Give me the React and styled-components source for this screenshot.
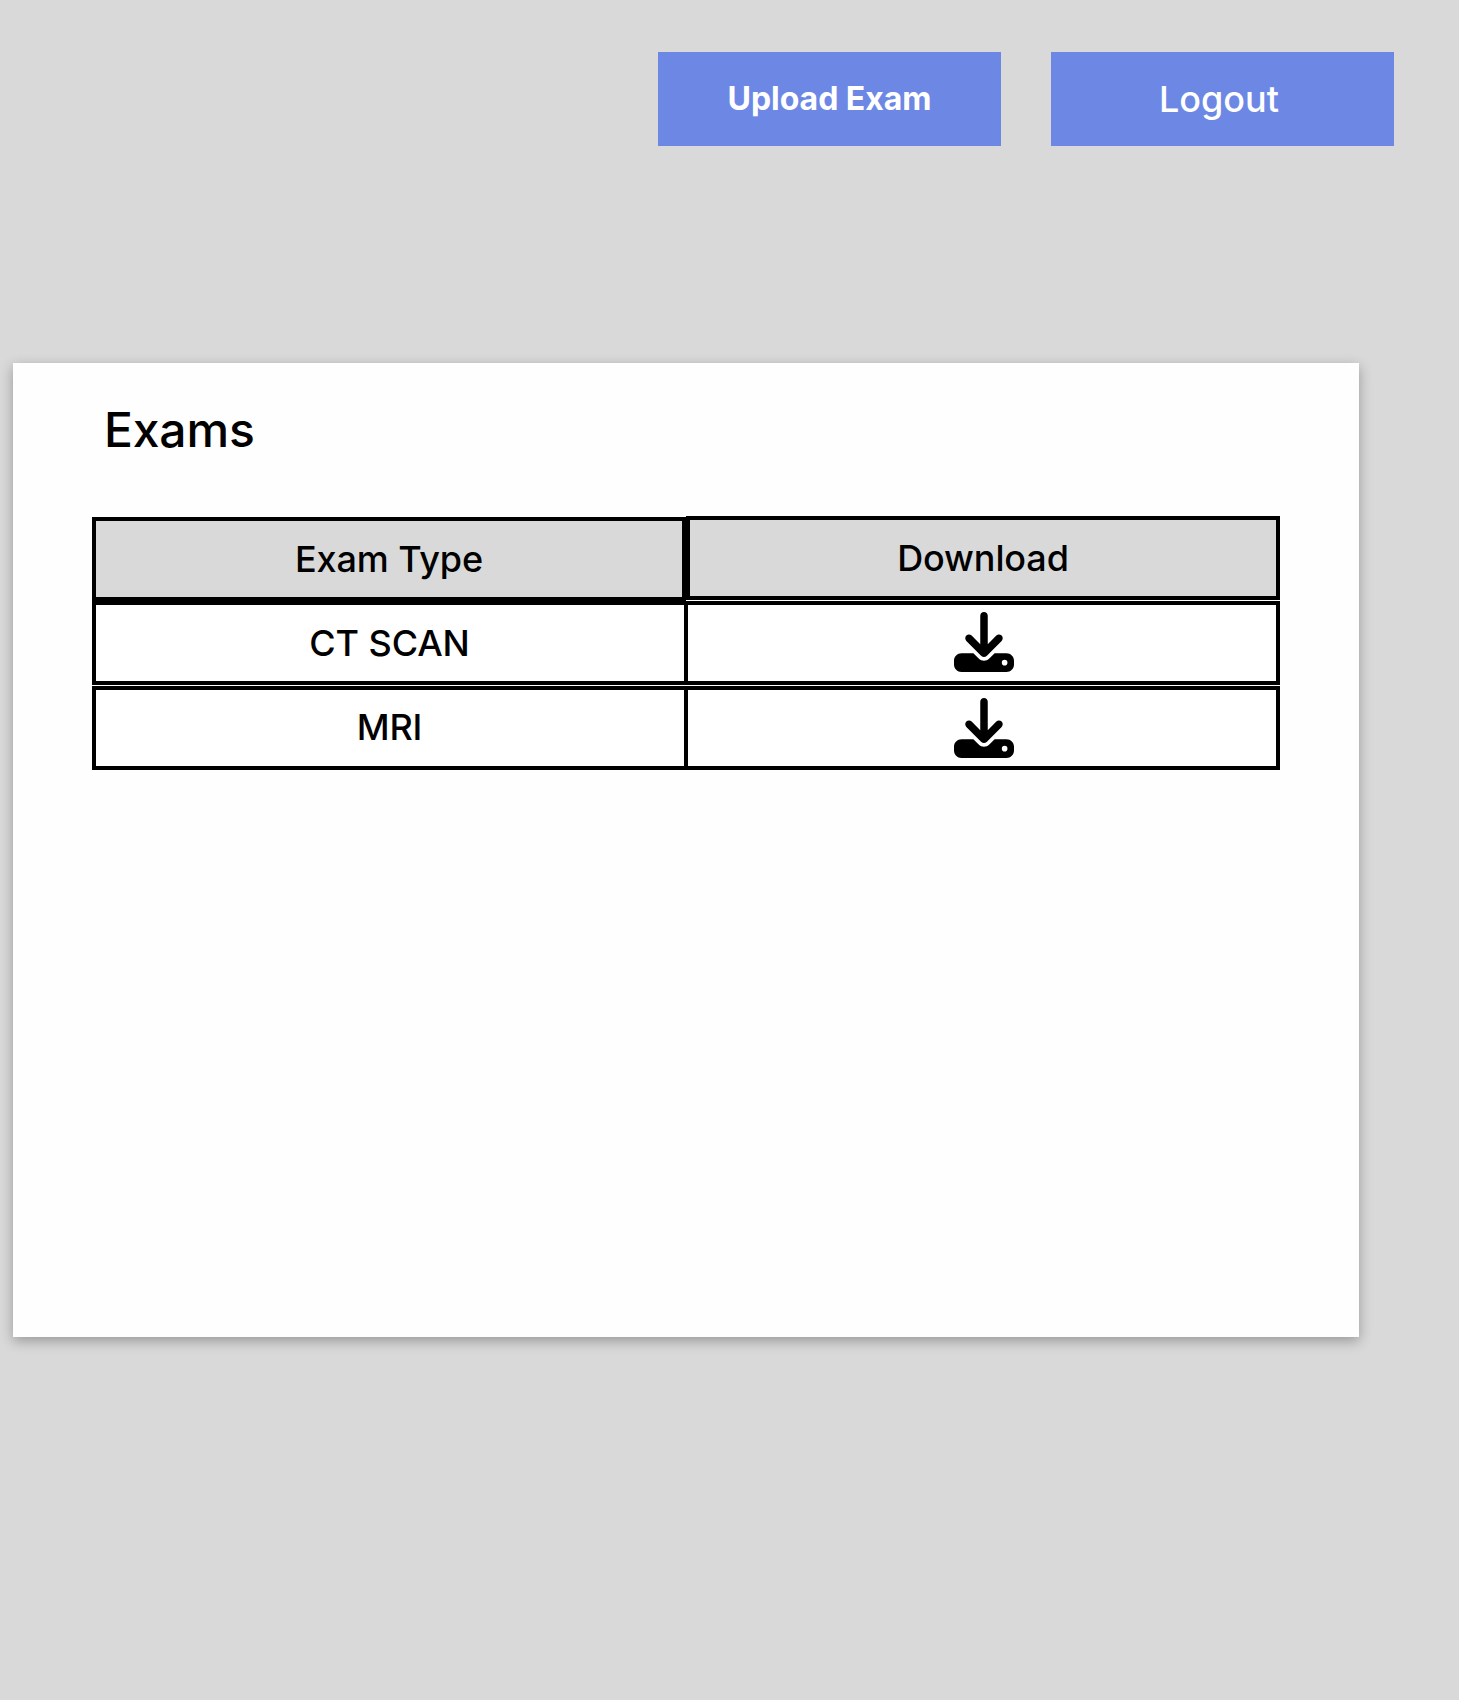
import React from "react";
import styled, { createGlobalStyle } from "styled-components";
import { FaDownload } from "react-icons/fa6";

const GlobalStyle = createGlobalStyle`
  *, *::before, *::after { box-sizing: border-box; }
  body {
    margin: 0;
    background: #d9d9d9;
    color: #000;
    font-family: Inter, "Liberation Sans", sans-serif;
  }
`;

const Page = styled.div`
  min-height: 1700px;
  padding: 52px 65px 0 13px;
  background: #d9d9d9;
`;

const Toolbar = styled.header`
  display: flex;
  justify-content: flex-end;
  gap: 50px;
`;

const Button = styled.button`
  display: flex;
  align-items: center;
  justify-content: center;
  width: 343px;
  height: 94px;
  padding: 0 ${(p) => p.$shift || 0}px ${(p) => p.$lift || 0}px 0;
  border: 0;
  background: #6d87e5;
  color: #fff;
  font-family: inherit;
  font-size: ${(p) => p.$size}px;
  font-weight: ${(p) => p.$weight};
  letter-spacing: -0.03px;
`;

const Card = styled.main`
  width: 1346px;
  height: 974px;
  margin-top: 217px;
  padding: 38px 79px 0;
  background: #fefefe;
  box-shadow: 0 4px 12px rgba(0, 0, 0, 0.3);
`;

const Title = styled.h1`
  margin: 0 0 57px 12px;
  font-size: 48px;
  font-weight: 500;
  line-height: 58px;
  letter-spacing: -0.15px;
`;

const Table = styled.section`
  display: flex;
  flex-direction: column;
  width: 1188px;
  font-size: 36px;
  font-weight: 500;
  letter-spacing: -0.11px;
`;

const Row = styled.div`
  display: flex;
  margin-bottom: 1px;
`;

const HeadCell = styled.div`
  display: flex;
  align-items: center;
  justify-content: center;
  width: 594px;
  height: 84px;
  border: 4px solid #000;
  background: #d9d9d9;
  margin-top: ${(p) => (p.$lowered ? 1 : 0)}px;
  margin-bottom: ${(p) => (p.$lowered ? -1 : 0)}px;
`;

const Cell = styled.div`
  display: flex;
  align-items: center;
  justify-content: center;
  width: 596px;
  height: 84px;
  border: 4px solid #000;
  background: #fff;
  padding: 0 ${(p) => (p.$icon ? 0 : 1)}px ${(p) => p.$lift || 0}px ${(p) => (p.$icon ? 4 : 0)}px;

  & + & {
    margin-left: -4px;
  }
`;

const exams = [
  { type: "CT SCAN", textLift: 0, iconLift: 2 },
  { type: "MRI", textLift: 2, iconLift: 0 },
];

export default function App() {
  return (
    <Page>
      <GlobalStyle />
      <Toolbar>
        <Button $size={32} $weight={700} $lift={2}>Upload Exam</Button>
        <Button $size={36} $weight={500} $shift={7}>Logout</Button>
      </Toolbar>
      <Card>
        <Title>Exams</Title>
        <Table>
          <Row>
            <HeadCell $lowered>Exam Type</HeadCell>
            <HeadCell>Download</HeadCell>
          </Row>
          {exams.map(({ type, textLift, iconLift }) => (
            <Row key={type}>
              <Cell $lift={textLift}>{type}</Cell>
              <Cell $icon $lift={iconLift}>
                <FaDownload size={60} />
              </Cell>
            </Row>
          ))}
        </Table>
      </Card>
    </Page>
  );
}
